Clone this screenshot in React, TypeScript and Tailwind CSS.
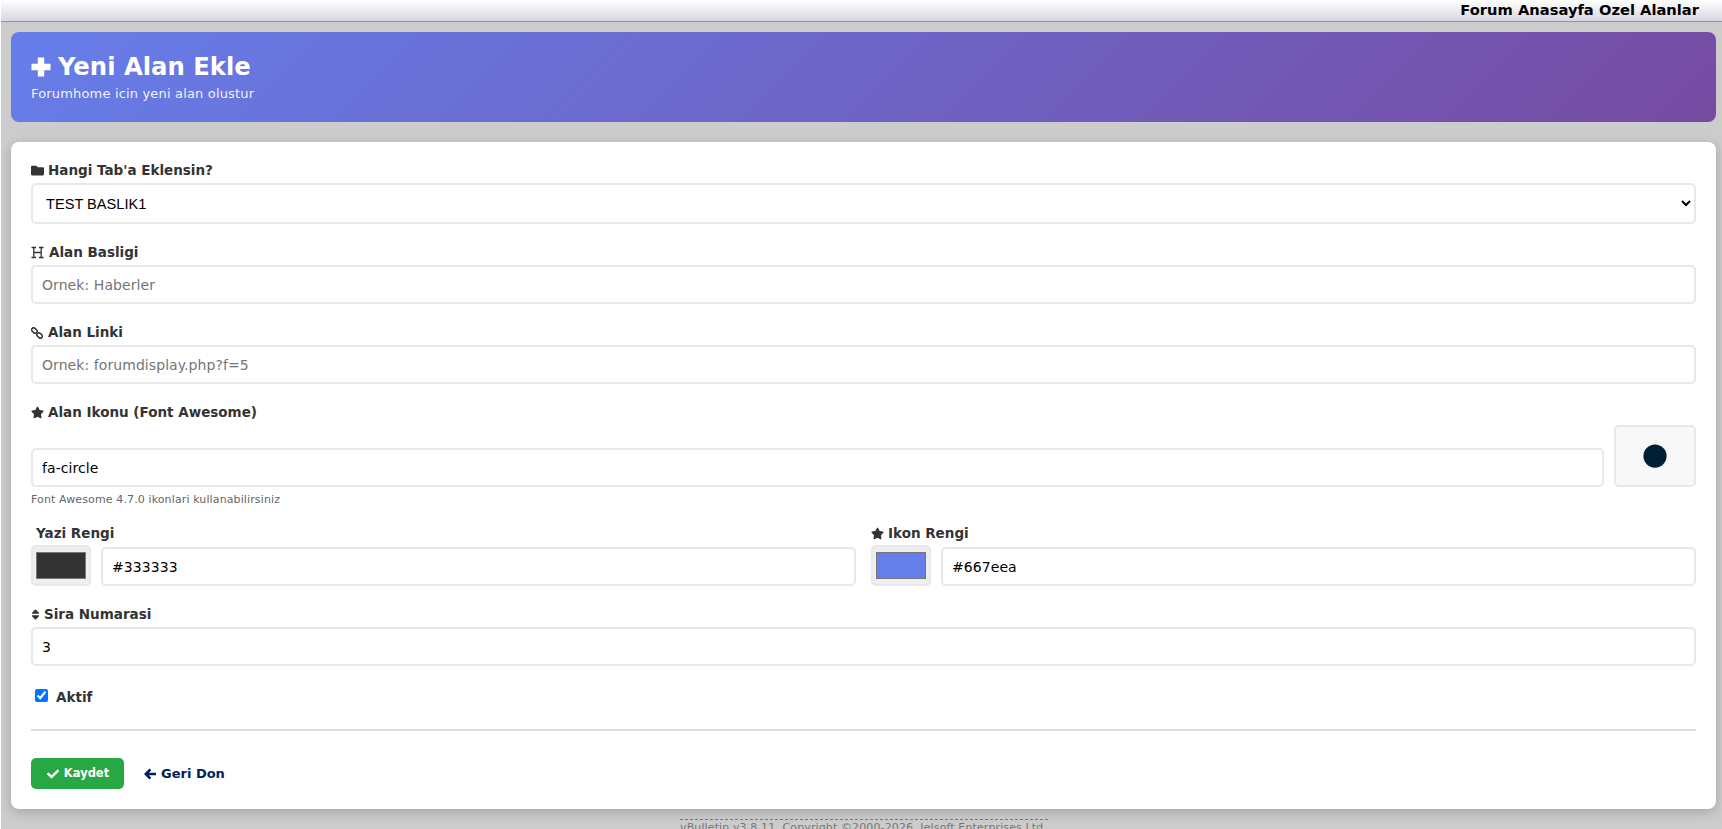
import type { ReactNode } from "react";
import { FaCheck, FaCircle, FaFolder, FaSort, FaStar } from "react-icons/fa";

const inputClass =
  "block w-full h-[39px] px-[9px] border-2 border-[#e8e8e8] rounded-[5px] bg-white text-[14px] tracking-[0.07px] text-black outline-none placeholder:text-[#757575]";

function PlusIcon() {
  return (
    <svg width="20" height="20" viewBox="0 0 20 20" fill="#fff" className="shrink-0">
      <path d="M6.8 0.5h6.4v6.3h6.3v6.4h-6.3v6.3H6.8v-6.3H0.5V6.8h6.3z" />
    </svg>
  );
}

function HeaderIcon() {
  return (
    <svg width="13" height="13" viewBox="0 0 13 13" fill="none" stroke="#333" className="shrink-0 mr-[1px]">
      <path d="M0.5 1.5h4.5M8 1.5h4.5M0.5 11.5h4.5M8 11.5h4.5M2.8 1.5v10M10.2 1.5v10M2.8 6.5h7.4" strokeWidth="1.3" />
    </svg>
  );
}

function LinkIcon() {
  return (
    <svg width="12" height="12" viewBox="0 0 12 12" fill="none" stroke="#333" strokeWidth="1.5" className="shrink-0 mr-[1px]">
      <rect x="0.4" y="1.5" width="6" height="4" rx="2" transform="rotate(42 3.4 3.5)" />
      <rect x="5.6" y="6.5" width="6" height="4" rx="2" transform="rotate(42 8.6 8.5)" />
    </svg>
  );
}

function ArrowIcon() {
  return (
    <svg width="12" height="12" viewBox="0 0 12 12" fill="none" stroke="#001f5c" strokeWidth="2.6" className="shrink-0">
      <path d="M6.4 1.4 1.8 6l4.6 4.6M2 6h10" />
    </svg>
  );
}

function Label({ icon, children, className = "" }: { icon?: ReactNode; children: ReactNode; className?: string }) {
  return (
    <label className={`flex items-center gap-[4px] h-[16px] pt-[1px] mb-[5px] text-[13.5px] leading-[15px] font-bold text-[#333] ${className}`}>
      {icon}
      {children}
    </label>
  );
}

function ColorField({ label, icon, value, className = "" }: { label: string; icon?: ReactNode; value: string; className?: string }) {
  return (
    <div className="flex-1">
      <Label icon={icon} className={className}>{label}</Label>
      <div className="flex gap-[10px] items-end -mt-[1px]">
        <input
          type="color"
          defaultValue={value}
          className="block w-[60px] h-[41px] shrink-0 px-[3px] py-[5px] border-2 border-[#e8e8e8] rounded-[5px] bg-[#efefef] [&::-webkit-color-swatch-wrapper]:p-0"
        />
        <input type="text" defaultValue={value} className={inputClass} />
      </div>
    </div>
  );
}

export default function App() {
  return (
    <div className="h-[829px] overflow-hidden bg-[#cccccc] border-l border-white font-['DejaVu_Sans',Verdana,sans-serif]">
      <div className="h-[22px] -ml-px flex items-center justify-end pr-[23px] border-b border-[#94949c] bg-gradient-to-b from-white to-[#d7d8e0]">
        <span className="text-[14.7px] font-bold text-black">Forum Anasayfa Ozel Alanlar</span>
      </div>

      <div className="pt-[10px] pl-[10px] pr-[6px]">
        <div className="h-[90px] mb-[20px] px-[20px] pt-[19px] rounded-[8px] text-white bg-[linear-gradient(135deg,#667eea_0%,#764ba2_100%)]">
          <h1 className="flex items-center gap-[7px] text-[24.3px] leading-[32px] font-bold">
            <PlusIcon />
            Yeni Alan Ekle
          </h1>
          <p className="mt-[3px] text-[13px] leading-[16px] tracking-[0.17px] opacity-90">Forumhome icin yeni alan olustur</p>
        </div>

        <form className="h-[667px] px-[20px] pt-[20px] rounded-[8px] bg-white shadow-[0_3px_12px_rgba(0,0,0,0.2)]">
          <div className="mb-[20px]">
            <Label icon={<FaFolder className="text-[13px]" />}>Hangi Tab'a Eklensin?</Label>
            <select className="block w-full h-[41px] px-[9px] border-2 border-[#e8e8e8] rounded-[5px] bg-white text-[14.6px] text-black font-['Liberation_Sans',Arial,sans-serif]">
              <option>TEST BASLIK1</option>
            </select>
          </div>

          <div className="mb-[20px]">
            <Label icon={<HeaderIcon />}>Alan Basligi</Label>
            <input type="text" placeholder="Ornek: Haberler" className={inputClass} />
          </div>

          <div className="mb-[20px]">
            <Label icon={<LinkIcon />}>Alan Linki</Label>
            <input type="text" placeholder="Ornek: forumdisplay.php?f=5" className={inputClass} />
          </div>

          <div className="mb-[18px]">
            <Label icon={<FaStar className="text-[13px]" />}>Alan Ikonu (Font Awesome)</Label>
            <div className="flex gap-[10px] items-end">
              <input type="text" defaultValue="fa-circle" className={inputClass} />
              <div className="flex items-center justify-center shrink-0 w-[82px] h-[62px] border-2 border-[#e8e8e8] rounded-[5px] bg-[#f8f8f8]">
                <FaCircle className="text-[24px] text-[#001f35]" />
              </div>
            </div>
            <p className="mt-[6px] text-[11px] leading-[14px] tracking-[0.12px] text-[#666]">Font Awesome 4.7.0 ikonlari kullanabilirsiniz</p>
          </div>

          <div className="flex gap-[15px] mb-[20px]">
            <ColorField label="Yazi Rengi" value="#333333" className="pl-[5px]" />
            <ColorField label="Ikon Rengi" icon={<FaStar className="text-[13px]" />} value="#667eea" />
          </div>

          <div className="mb-[20px]">
            <Label icon={<FaSort className="w-[9px] h-[13px]" />}>Sira Numarasi</Label>
            <input type="text" defaultValue="3" className={inputClass} />
          </div>

          <div className="flex items-center gap-[8px] h-[16px] mt-[23px] pl-[4px] text-[13.5px] font-bold text-[#333]">
            <input type="checkbox" defaultChecked className="w-[13px] h-[13px] mb-[3px] accent-[#0075ff]" />
            Aktif
          </div>

          <hr className="mt-[24px] mb-[27px] h-[2px] border-0 bg-[#dedede]" />

          <div className="flex items-center gap-[20px]">
            <button type="button" className="flex items-center justify-center gap-[5px] w-[93px] h-[31px] pl-[1px] rounded-[5px] bg-[#28a745] text-[11.5px] font-bold text-white">
              <FaCheck className="text-[12px]" />
              Kaydet
            </button>
            <a href="#" className="flex items-center gap-[5px] text-[13px] font-bold text-[#001f5c]">
              <ArrowIcon />
              Geri Don
            </a>
          </div>
        </form>

        <div className="w-[368px] mx-auto mt-[10px] pt-[1px] border-t border-dashed border-[#777] text-center text-[11px] leading-[14px] tracking-[0.12px] text-[#777] whitespace-nowrap">
          vBulletin v3.8.11, Copyright ©2000-2026, Jelsoft Enterprises Ltd.
        </div>
      </div>
    </div>
  );
}
